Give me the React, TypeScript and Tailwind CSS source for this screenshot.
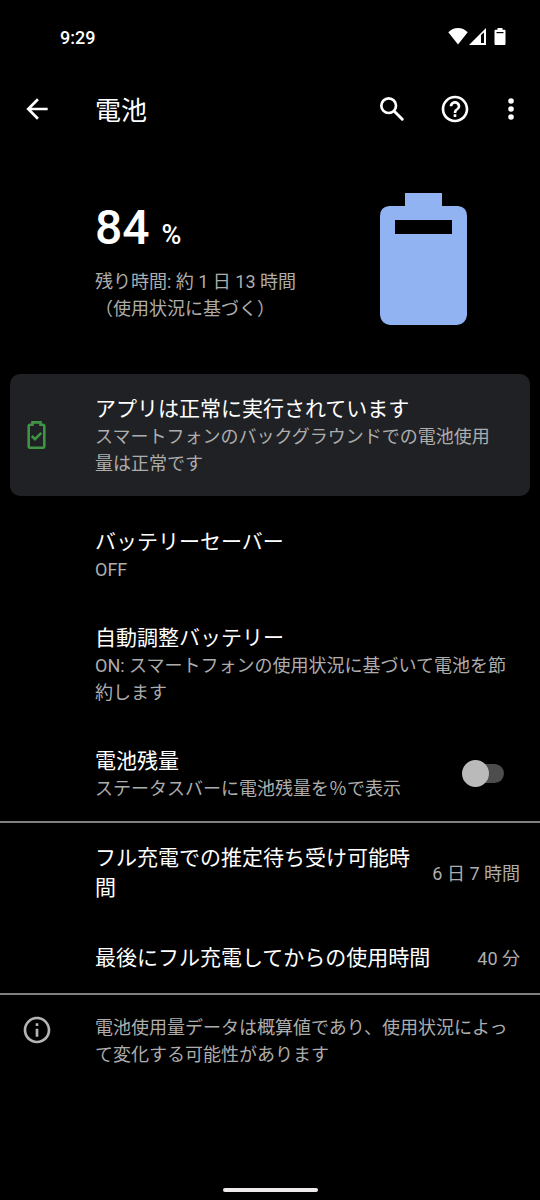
import type { ReactNode } from 'react';

interface SettingRowProps {
    title: string;
    summary: string;
    children?: ReactNode;
}

interface StatRowProps {
    label: string;
    value: string;
}

const stats: StatRowProps[] = [
    { label: 'フル充電での推定待ち受け可能時間', value: '6 日 7 時間' },
    { label: '最後にフル充電してからの使用時間', value: '40 分' },
];

const StatusBar = () => (
    <div className="flex h-[74px] items-center justify-between pr-[34px] pl-[60px]">
        <span className="pt-px text-lg font-medium">9:29</span>
        <div className="flex items-center">
            <svg className="h-[18px] w-5" viewBox="0 0 20 18" fill="currentColor" aria-hidden="true">
                <path d="M10 16.500 0.300 4.300C3 1.400 6.300 0 10 0s7 1.400 9.700 4.300z" />
            </svg>
            <svg className="ml-px h-[18px] w-[17px]" viewBox="0 0 17 18" aria-hidden="true">
                <path d="M0 17 17 0v17z" fill="currentColor" />
                <path d="M12 7 15 4.500v10.500H12z" fill="#000" />
            </svg>
            <svg className="ml-2 h-[18px] w-3" viewBox="0 0 12 18" aria-hidden="true">
                <path d="M3.500 0h5v1.700h2q1 0 1 1V16q0 1-1 1h-9q-1 0-1-1V2.700q0-1 1-1h2z" fill="currentColor" />
                <path d="M2.500 4h7v1.200h-7z" fill="#000" />
            </svg>
        </div>
    </div>
);

const Header = () => (
    <header className="flex h-[70px] items-center pr-[13px] pl-[21px]">
        <button type="button" aria-label="戻る" className="mr-[42px]">
            <svg className="size-8" viewBox="0 0 24 24" fill="currentColor">
                <path d="M20 11H7.830l5.590-5.590L12 4l-8 8 8 8 1.410-1.410L7.830 13H20z" />
            </svg>
        </button>
        <h1 className="flex-1 pt-1 text-[26px] leading-8">電池</h1>
        <button type="button" aria-label="検索" className="mr-[31px]">
            <svg className="size-8" viewBox="0 0 24 24" fill="none" stroke="currentColor" strokeWidth="2">
                <circle cx="9.500" cy="9.500" r="5.500" />
                <path d="m13.700 13.700 6 6" strokeWidth="2.200" strokeLinecap="round" />
            </svg>
        </button>
        <button type="button" aria-label="ヘルプ" className="mr-6">
            <svg className="size-8" viewBox="0 0 24 24" fill="currentColor">
                <path d="M11 18h2v-2h-2v2zm1-16C6.480 2 2 6.480 2 12s4.480 10 10 10 10-4.480 10-10S17.520 2 12 2zm0 18c-4.410 0-8-3.590-8-8s3.590-8 8-8 8 3.590 8 8-3.590 8-8 8zm0-14c-2.210 0-4 1.790-4 4h2c0-1.100.9-2 2-2s2 .9 2 2c0 2-3 1.750-3 5h2c0-2.250 3-2.500 3-5 0-2.210-1.790-4-4-4z" />
            </svg>
        </button>
        <button type="button" aria-label="その他のオプション">
            <svg className="size-8" viewBox="0 0 24 24" fill="currentColor">
                <circle cx="12" cy="6" r="2.100" />
                <circle cx="12" cy="12" r="2.100" />
                <circle cx="12" cy="18" r="2.100" />
            </svg>
        </button>
    </header>
);

const BatterySummary = () => (
    <section className="flex items-center justify-between py-[49px] pr-[73px] pl-[95px]">
        <div className="pt-1">
            <p className="flex items-baseline gap-3 text-5xl leading-[56px] font-medium">
                84
                <span className="text-[27px] leading-8">%</span>
            </p>
            <p className="mt-3 text-lg leading-[27px] text-[#adadad]">
                残り時間: 約 1 日 13 時間
                <br />
                （使用状況に基づく）
            </p>
        </div>
        <svg className="h-[132px] w-[87px]" viewBox="0 0 87 132" fill="#92b3f2" aria-hidden="true">
            <path
                fillRule="evenodd"
                d="M25 0h37v13h16q9 1 9 10v99q-1 9-10 10H10q-9-1-10-10V23q0-9 9-10h16zM15 27v14h57V27z"
            />
        </svg>
    </section>
);

const SettingRow = ({ title, summary, children }: SettingRowProps) => (
    <div className="flex items-center pr-5 pl-[95px]">
        <div className="flex-1 pt-[23px] pb-[19px]">
            <h2 className="text-[21px] leading-[27px]">{title}</h2>
            <p className="text-lg leading-[27px] text-[#adadad]">{summary}</p>
        </div>
        {children}
    </div>
);

const StatRow = ({ label, value }: StatRowProps) => (
    <div className="flex items-center gap-4 py-5 pr-5 pl-[95px]">
        <dt className="flex-1 text-[21px] leading-[30px]">{label}</dt>
        <dd className="text-lg leading-[27px] whitespace-nowrap text-[#adadad]">{value}</dd>
    </div>
);

const App = () => {
    return (
        <div
            lang="ja"
            className="flex min-h-screen flex-col bg-black font-['Roboto','Noto_Sans_CJK_JP',sans-serif] text-white"
        >
            <StatusBar />
            <Header />
            <main>
                <BatterySummary />

                <section className="mx-2.5 mb-2.5 flex items-center rounded-[10px] bg-[#202124] pr-6">
                    <div className="w-[85px] pl-[17px]">
                        <svg className="h-7 w-[19px]" viewBox="0 0 19 28" fill="none" stroke="#3f9543" strokeWidth="2.600" aria-hidden="true">
                            <path d="M5.500 3.800V1.400h8v2.400h2.300q1.500 0 1.500 1.500v20q0 1.500-1.500 1.500H3.200q-1.500 0-1.500-1.500v-20q0-1.500 1.500-1.500z" />
                            <path d="m4.800 15 3.200 3.200 6.300-6.300" />
                        </svg>
                    </div>
                    <div className="flex-1 pt-[22px] pb-[19px]">
                        <h2 className="text-[21px] leading-[27px]">アプリは正常に実行されています</h2>
                        <p className="text-lg leading-[27px] text-[#adadad]">
                            スマートフォンのバックグラウンドでの電池使用量は正常です
                        </p>
                    </div>
                </section>

                <SettingRow title="バッテリーセーバー" summary="OFF" />
                <SettingRow
                    title="自動調整バッテリー"
                    summary="ON: スマートフォンの使用状況に基づいて電池を節約します"
                />
                <SettingRow title="電池残量" summary="ステータスバーに電池残量を％で表示">
                    <input
                        type="checkbox"
                        role="switch"
                        aria-label="電池残量"
                        className="mr-4 grid h-[27px] w-[42px] appearance-none items-center before:z-10 before:col-start-1 before:row-start-1 before:size-[27px] before:rounded-full before:bg-[#bababa] after:col-start-1 after:row-start-1 after:ml-2 after:h-[19px] after:rounded-full after:bg-[#4d4d4d] checked:before:ml-auto checked:before:bg-[#92b3f2]"
                    />
                </SettingRow>

                <dl className="border-y-2 border-[#808080]">
                    {stats.map(stat => (
                        <StatRow key={stat.label} label={stat.label} value={stat.value} />
                    ))}
                </dl>

                <section className="flex py-[19px] pr-5 text-[#adadad]">
                    <div className="w-[95px] pl-[21px]">
                        <svg className="size-8" viewBox="0 0 24 24" fill="#b5b5b5" aria-hidden="true">
                            <path d="M11 7h2v2h-2zm0 4h2v6h-2zm1-9C6.480 2 2 6.480 2 12s4.480 10 10 10 10-4.480 10-10S17.520 2 12 2zm0 18c-4.410 0-8-3.590-8-8s3.590-8 8-8 8 3.590 8 8-3.590 8-8 8z" />
                        </svg>
                    </div>
                    <p className="flex-1 text-lg leading-[27px]">
                        電池使用量データは概算値であり、使用状況によって変化する可能性があります
                    </p>
                </section>
            </main>
            <div className="mt-auto flex justify-center pb-2">
                <div className="h-1 w-[95px] rounded-full bg-[#eeeaec]" />
            </div>
        </div>
    );
};

export default App;
